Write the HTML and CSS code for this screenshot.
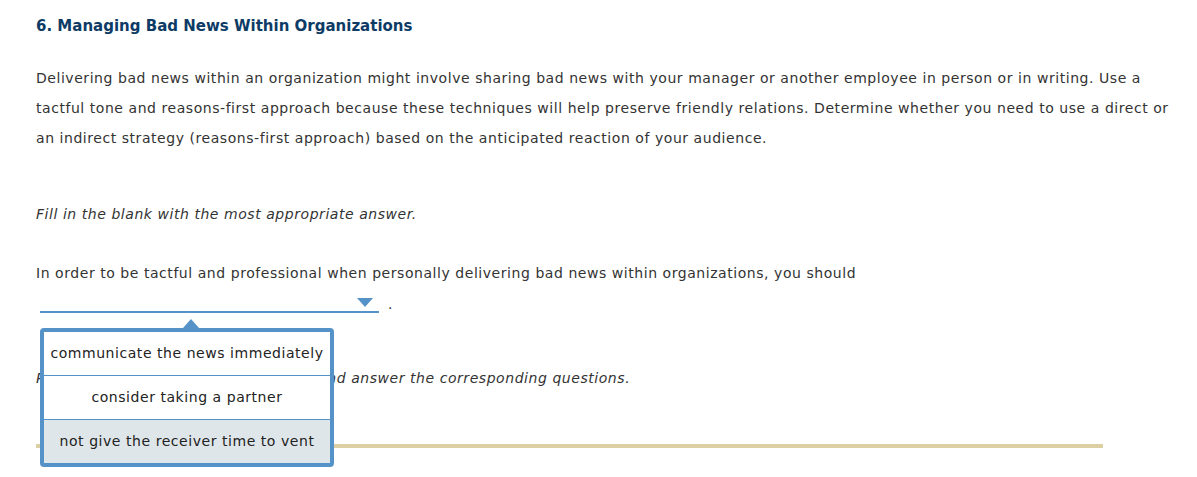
FILE: index.html
```
<!DOCTYPE html>
<html lang="en">
<head>
    <meta charset="UTF-8">
    <title>Managing Bad News Within Organizations</title>
    <link rel="stylesheet" href="styles.css">
</head>
<body>
    <div class="question-Container">
        <h2 class="q-title">6. Managing Bad News Within Organizations</h2>

        <p class="intro">Delivering bad news within an organization might involve sharing bad news with your manager or another employee in person or in writing. Use a tactful tone and reasons-first approach because these techniques will help preserve friendly relations. Determine whether you need to use a direct or an indirect strategy (reasons-first approach) based on the anticipated reaction of your audience.</p>

        <p class="instruction">Fill in the blank with the most appropriate answer.</p>

        <p class="prompt">In order to be tactful and professional when personally delivering bad news within organizations, you should</p>

        <div class="blank-row">
            <div class="select-wrap">
                <div class="select-line">
                    <span class="select-arrow"></span>
                </div>
                <div class="options-popup">
                    <div class="option">communicate the news immediately</div>
                    <div class="option">consider taking a partner</div>
                    <div class="option hover">not give the receiver time to vent</div>
                </div>
            </div>
            <span class="period">.</span>
        </div>

        <p class="instruction next">Part 2: Read the following scenarios, and answer the corresponding questions.</p>

        <div class="divider"></div>
    </div>
</body>
</html>
```

FILE: styles.css
```
body {
    margin: 0;
    background: #fff;
    font-family: "DejaVu Sans", Verdana, sans-serif;
    font-size: 14px;
    letter-spacing: 0.55px;
    color: #333;
}

.question-Container {
    min-height: 100vh;
    padding: 17px 20px 40px 36px;
    box-sizing: border-box;
}

.q-title {
    margin: 0;
    font-size: 15px;
    letter-spacing: 0;
    line-height: 18px;
    color: #0d3b66;
}

.intro {
    margin: 28px 0 0;
    line-height: 30px;
}

.instruction {
    margin: 46px 0 0;
    font-style: italic;
    line-height: 30px;
}

.prompt {
    margin: 29px 0 0;
    line-height: 30px;
}

.blank-row {
    display: flex;
    align-items: flex-end;
    margin: 0 0 0 4px;
}

.select-wrap {
    position: relative;
    width: 339px;
}

.select-line {
    height: 23px;
    border-bottom: 2px solid #5592c8;
    position: relative;
}

.select-arrow {
    position: absolute;
    right: 6px;
    top: 10px;
    width: 0;
    height: 0;
    border-left: 8px solid transparent;
    border-right: 8px solid transparent;
    border-top: 9px solid #5592c8;
}

.period {
    margin-left: 9px;
    line-height: 20px;
    position: relative;
    top: 1px;
}

.options-popup {
    position: absolute;
    left: 0;
    top: 40px;
    width: 286px;
    background: #fff;
    border: 4px solid #5592c8;
    border-radius: 4px;
    z-index: 2;
}

.options-popup::before {
    content: "";
    position: absolute;
    left: 139px;
    top: -13px;
    border-left: 8px solid transparent;
    border-right: 8px solid transparent;
    border-bottom: 9px solid #5592c8;
}

.option {
    height: 43px;
    line-height: 43px;
    text-align: center;
    color: #222;
    border-top: 1px solid #5592c8;
    white-space: nowrap;
}

.option:first-child {
    border-top: none;
}

.option.hover {
    background: #dfe6ea;
}

.instruction.next {
    margin-top: 50px;
}

.divider {
    margin: 51px 0 0 0;
    width: 1067px;
    height: 4px;
    background: #dbcfa3;
}
```
